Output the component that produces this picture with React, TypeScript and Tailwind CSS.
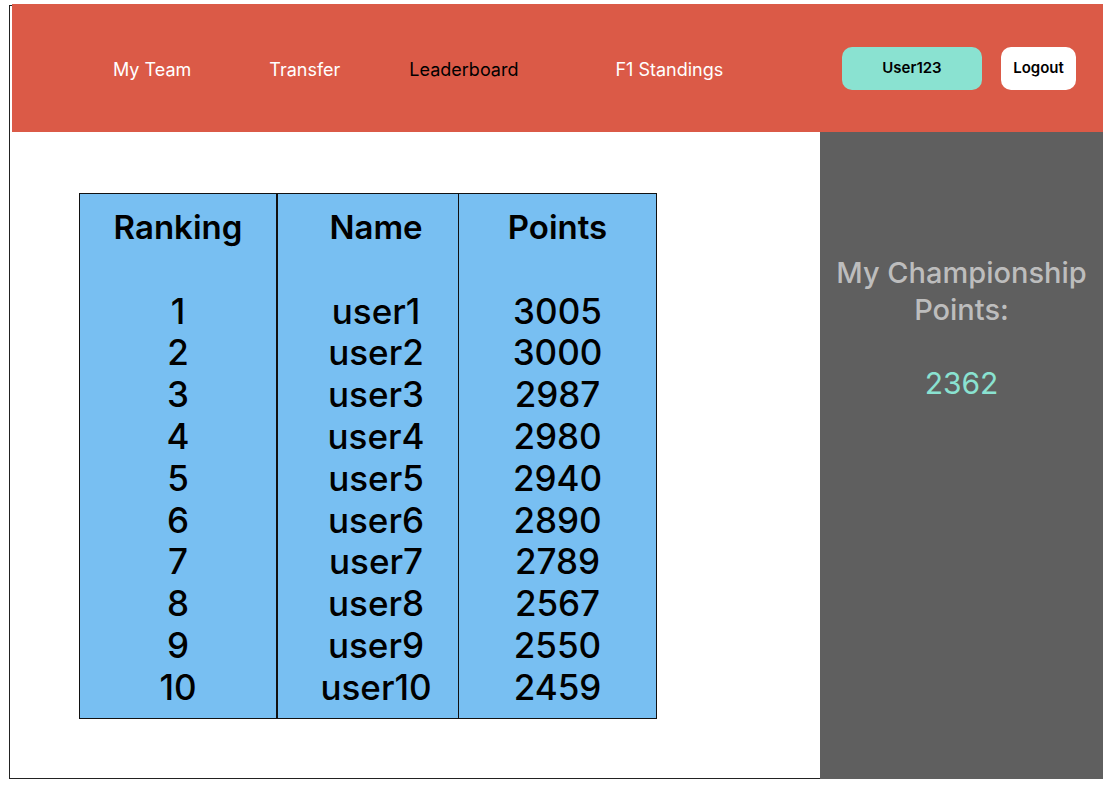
import React from "react";

const rows = [
  ["1", "user1", "3005"],
  ["2", "user2", "3000"],
  ["3", "user3", "2987"],
  ["4", "user4", "2980"],
  ["5", "user5", "2940"],
  ["6", "user6", "2890"],
  ["7", "user7", "2789"],
  ["8", "user8", "2567"],
  ["9", "user9", "2550"],
  ["10", "user10", "2459"],
];

function Column({ title, values, className }: { title: string; values: string[]; className: string }) {
  return (
    <div className={"flex flex-col items-center pt-[13px] pb-[9px] " + className}>
      <div className="text-[33px] font-semibold leading-[41.8px]">{title}</div>
      <div className="h-[41.8px]" />
      {values.map((v) => (
        <div key={v} className="text-[35px] font-medium leading-[41.8px]">
          {v}
        </div>
      ))}
    </div>
  );
}

export default function App() {
  return (
    <div className="w-[1120px] h-[796px] bg-white pt-[5px] pl-[9px]" style={{ fontFamily: "Inter, 'Noto Sans', sans-serif" }}>
      <div className="w-[1094px] h-[774px] border-l border-t border-b border-[#222]">
        <header className="ml-[2px] -mt-[2px] h-[128px] bg-[#db5a47] flex items-center">
          <nav className="flex items-center text-[18px] mt-[3px]">
            <a className="ml-[101px] text-white">My Team</a>
            <a className="ml-[78px] text-white">Transfer</a>
            <a className="ml-[69px] text-black">Leaderboard</a>
            <a className="ml-[97px] text-white">F1 Standings</a>
          </nav>
          <div className="ml-auto mr-[27px] flex items-center gap-[19px]">
            <button className="w-[140px] h-[43px] rounded-[10px] bg-[#8ae2d1] text-[15px] font-semibold text-black">
              User123
            </button>
            <button className="w-[75px] h-[43px] rounded-[10px] bg-white text-[15px] font-semibold text-black">
              Logout
            </button>
          </div>
        </header>
        <div className="flex h-[646px]">
          <main className="flex-1 pt-[61px] pl-[69px]">
            <div className="flex w-[578px] border border-[#111] bg-[#78bff2] text-black">
              <Column title="Ranking" values={rows.map((r) => r[0])} className="w-[198px] border-r-2 border-[#111]" />
              <Column title="Name" values={rows.map((r) => r[1])} className="w-[181px] pl-[16px] border-r border-[#111]" />
              <Column title="Points" values={rows.map((r) => r[2])} className="flex-1" />
            </div>
          </main>
          <aside className="w-[283px] h-[647px] bg-[#5f5f5f] flex flex-col items-center pt-[122px] text-center">
            <div className="text-[29px] font-medium leading-[37px] text-[#bdbdbd]">
              My Championship
              <br />
              Points:
            </div>
            <div className="mt-[37px] text-[30px] leading-[37px] text-[#8ae2d1]">2362</div>
          </aside>
        </div>
      </div>
    </div>
  );
}
